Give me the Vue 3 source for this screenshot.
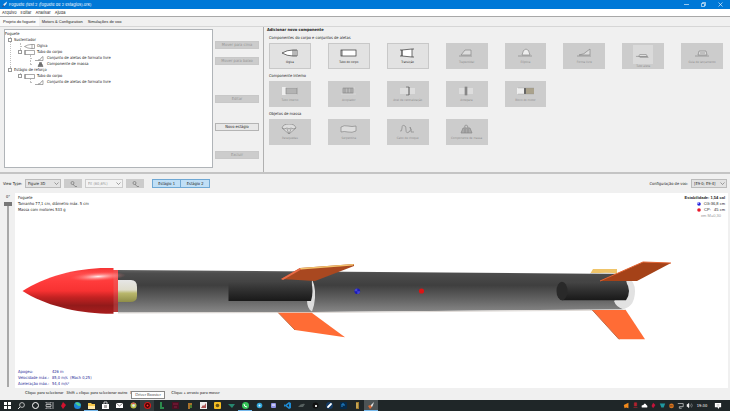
<script setup>
import { ref } from 'vue'

const rotation = ref(0)
const menus = ['Arquivo', 'Editar', 'Analisar', 'Ajuda']
const tabs = ['Projeto do foguete', 'Motors & Configuration', 'Simulações de voo']

const sections = [
  {
    title: 'Componentes do corpo e conjuntos de aletas',
    items: [
      { label: 'Ogiva', icon: 'nose', on: true },
      { label: 'Tubo do corpo', icon: 'tube', on: true },
      { label: 'Transição', icon: 'transition', on: true },
      { label: 'Trapezoidal', icon: 'trapezoid' },
      { label: 'Elíptica', icon: 'ellipse' },
      { label: 'Forma livre', icon: 'free' },
      { label: 'Tubo aleta', icon: 'tubefin', light: true },
      { label: 'Guia de lançamento', icon: 'lug' }
    ]
  },
  {
    title: 'Componente interno',
    items: [
      { label: 'Tubo interno', icon: 'inner' },
      { label: 'Acoplador', icon: 'coupler' },
      { label: 'Anel de centralização', icon: 'ring' },
      { label: 'Antepara', icon: 'bulkhead' },
      { label: 'Bloco do motor', icon: 'block' }
    ]
  },
  {
    title: 'Objetos de massa',
    items: [
      { label: 'Paraquedas', icon: 'chute' },
      { label: 'Serpentina', icon: 'streamer' },
      { label: 'Cabo de choque', icon: 'cord' },
      { label: 'Componente de massa', icon: 'mass' }
    ]
  }
]

const icons = {
  nose: '<path d="M1 5Q6 2 12 2H16V8H12Q6 8 1 5Z" fill="#fff"/><path d="M12 2V8M14 2V8"/>',
  tube: '<rect x="1" y="2" width="15" height="6" fill="#fff"/><path d="M2 2V8"/>',
  transition: '<path d="M3 2L13 1V9L3 8Z" fill="#fff"/><path d="M13 1H15M13 9H15M1 2H3M1 8H3" /><path d="M3 2V8"/>',
  trapezoid: '<path d="M3 7L7 2H13V7Z" fill="#ddd"/><path d="M1 8H14"/>',
  ellipse: '<path d="M5 7Q6 1 9 1T13 7Z" fill="#eee"/><path d="M1 8H15"/>',
  free: '<path d="M3 7Q9 6 10 4L14 1V7Z" fill="#ddd"/><path d="M1 8H15"/>',
  tubefin: '<path d="M4 7L5 5H12L13 7Z" fill="#eee"/><path d="M1 7H13L14 8H5"/>',
  lug: '<path d="M4 7L5 3H12L13 7Z" fill="#ddd"/><path d="M6 5H11M1 8H15"/>',
  inner: '<rect x="1" y="1" width="15" height="8" fill="#eee" stroke="none"/><rect x="5" y="2" width="11" height="6" fill="#bbb"/><path d="M5 4H16M5 6H16" stroke-width=".3"/>',
  coupler: '<path d="M1 8H16M2 2H15" stroke="#ddd"/><rect x="3" y="2" width="10" height="5" fill="#bbb"/><path d="M8 2V7M5 2V7M11 2V7"/>',
  ring: '<rect x="1" y="2" width="15" height="6" fill="#ddd" stroke="none"/><path d="M7 1H10V9H7M10 1V9" stroke="#666"/>',
  bulkhead: '<rect x="1" y="2" width="14" height="6" fill="#ddd" stroke="none"/><rect x="7" y="1" width="2" height="8" fill="#888"/>',
  block: '<rect x="0" y="2" width="8" height="6" fill="#eee" stroke="none"/><rect x="7" y="2" width="2" height="6" fill="#666" stroke="none"/><rect x="9" y="2" width="8" height="6" fill="#aaa28c" stroke="none"/><path d="M1 2H17M1 8H17" stroke-width=".3"/>',
  chute: '<path d="M1 4Q2 0 8 0T15 4Q12 6 10 4Q8 6 6 4Q3 6 1 4L8 10L15 4M6 5L8 10L10 5" fill="#ddd"/>',
  streamer: '<path d="M1 3Q4 1 8 2T16 2V7Q12 9 8 8T1 8Z" fill="#ddd"/>',
  cord: '<path d="M1 7Q3 8 3 4T6 2Q7 2 7 6T10 8T11 3Q13 6 12 8H15" fill="none"/>',
  mass: '<path d="M3 9L5 4H12L14 9Z" fill="#aaa"/><path d="M7 4Q6 1 8 1T10 4M7 5V9M10 5V9"/>'
}

const taskIcons = [
  { name: 'Iniciar', svg: '<path d="M1 1H4V4H1ZM5 1H8V4H5ZM1 5H4V8H1ZM5 5H8V8H5Z" fill="#fff"/>' },
  { name: 'Pesquisar', svg: '<circle cx="5" cy="4" r="2.4" fill="none" stroke="#ddd" stroke-width=".8"/><path d="M3 6L1 8" stroke="#ddd"/>' },
  { name: 'Cortana', svg: '<circle cx="4.500" cy="4.500" r="3" fill="none" stroke="#fff"/>' },
  { name: 'Visão de tarefas', svg: '<path d="M1 1V2H6V1M1 8V7H6V8M1 3.500H6V5.500H1ZM8 1V8" fill="none" stroke="#ddd" stroke-width=".7"/>' },
  { name: 'AMD', svg: '<path d="M4 1L7 4L4 8L2 5Z" fill="#d3122f"/>' },
  { name: 'Edge', svg: '<circle cx="4.500" cy="4.500" r="3.500" fill="#1c86d8"/><path d="M2 2Q5 0 8 4Q6 6 4 4Z" fill="#4ccf8c"/>' },
  { name: 'Explorador', open: true, svg: '<path d="M1 2H4L5 3H8V7H1Z" fill="#f5c84b"/><path d="M1 5H8V8H1Z" fill="#ffe9a8"/>' },
  { name: 'Loja', svg: '<path d="M1 3H8V8H1Z" fill="#fff"/><path d="M3 3V1H6V3" fill="none" stroke="#fff" stroke-width=".7"/><path d="M3 4H6V7H3Z" fill="#aaa"/>' },
  { name: 'Correio', svg: '<path d="M1 2H8V7H1Z" fill="#fff"/><path d="M1 2L4.500 5L8 2" fill="none" stroke="#333" stroke-width=".6"/>' },
  { name: 'Chrome', svg: '<circle cx="4.500" cy="4.500" r="3" fill="#b9c04a"/><path d="M2 3Q4 0 7 3Z" fill="#d55"/><circle cx="4.500" cy="4.500" r="1.300" fill="#dde8f5"/>' },
  { name: 'Driver Booster', lit: true, svg: '<circle cx="4.500" cy="4.500" r="3" fill="#400" stroke="#d11a1a" stroke-width="1.200"/><circle cx="4.500" cy="4.500" r="1" fill="#f33"/>' },
  { name: 'Editor', svg: '<path d="M3 1V8H7V6H5V1Z" fill="#2c8b4c"/>' },
  { name: 'Captura', svg: '<rect x="1" y="1" width="7" height="7" fill="#4a1022"/><path d="M2 3H7M3 6H6" stroke="#a2264a" stroke-width=".7"/>' },
  { name: 'Jogo', svg: '<path d="M3 2H7V4H5V8H3Z" fill="#a7722b"/><path d="M5 4H7V7H5Z" fill="#4d7a30"/>' },
  { name: 'Fotos', svg: '<rect x="1" y="1" width="7" height="7" fill="#eee"/><path d="M2 7L4 4L5 5L7 2V7Z" fill="#a55"/>' },
  { name: 'Música', svg: '<rect x="1" y="1" width="7" height="7" rx="1" fill="#f3bd23"/><circle cx="4.500" cy="4.500" r="1.800" fill="#6a5312"/>' },
  { name: 'Diamante', svg: '<path d="M1 3H8L5 7Z" fill="#27876f"/>' },
  { name: 'WhatsApp', open: true, svg: '<circle cx="4.500" cy="4.500" r="3.500" fill="#37c559"/><path d="M3 3Q3 6 6 6" fill="none" stroke="#fff"/>' },
  { name: 'Telegram', svg: '<circle cx="4.500" cy="4.500" r="2.800" fill="#32a5d9"/><circle cx="4.500" cy="4.500" r="1" fill="#dff4ff"/>' },
  { name: 'Discord', svg: '<rect x="2" y="2" width="5" height="5" rx="1" fill="#8f93e6"/><path d="M3 4H6" stroke="#fff"/>' },
  { name: 'Código', svg: '<path d="M6 1L8 2V7L6 8L2 5L1 6V3L2 4ZM6 3L4 4.500L6 6Z" fill="#1f8ad2" fill-rule="evenodd"/>' },
  { name: 'Console', svg: '<path d="M1 6Q4 2 8 3L6 6Z" fill="#56605f"/>' },
  { name: 'Epic', svg: '<circle cx="4.500" cy="4.500" r="3" fill="#111"/><path d="M4 4H6V6H4Z" fill="#ddd"/>' },
  { name: 'Steam', svg: '<circle cx="4.500" cy="4.500" r="3.500" fill="#143a63"/><path d="M3 6L6 3" stroke="#fff" stroke-width="1.800" stroke-linecap="round"/>' },
  { name: 'Photoshop', svg: '<rect x="1" y="1" width="7" height="7" rx="1" fill="#062a4a"/><path d="M3 6V3H5V5" fill="none" stroke="#2388d4"/>' },
  { name: 'Arquivo', svg: '<rect x="3" y="1" width="3" height="7" fill="#a07a2c"/><path d="M4 2V7" stroke="#e8ce7a"/>' },
  { name: 'OpenRocket', active: true, open: true, svg: '<path d="M3 6L4 4L7 1L6 4L5 6Z" fill="#e6e1df"/><path d="M1 5L3 4L5 6L3 8Z" fill="#d66a35"/>' }
]

const trayIcons = [
  { name: 'Avast', svg: '<path d="M1 4L7 1V8L4 7L2 8Z" fill="#f28a1c"/>' },
  { name: 'Microfone', svg: '<path d="M3 1H6V5H3ZM2 7H7" fill="#b3232f" stroke="#b3232f" stroke-width=".8"/>' },
  { name: 'Nuvem', svg: '<path d="M1 7Q0 4 3 4Q5 0 7 4Q9 5 8 7Z" fill="#fff"/>' },
  { name: 'Radeon', svg: '<path d="M4 1L7 4L4 8L2 5Z" fill="#c3133a"/>' },
  { name: 'Escudo', svg: '<path d="M1 2H8L6 7H3Z" fill="#1f97a0"/>' },
  { name: 'Atualização', svg: '<circle cx="4.500" cy="5" r="3" fill="#d8741f"/><path d="M2 5H6" stroke="#5b3010"/>' },
  { name: 'Rede', svg: '<path d="M1 2H8V6H3V8H6" fill="none" stroke="#eee" stroke-width=".8"/>' },
  { name: 'Volume', svg: '<path d="M1 3H2L4 1V8L2 6H1Z" fill="#eee"/><path d="M5 3Q6 4.500 5 6M7 2Q9 4.500 7 7" fill="none" stroke="#bbb" stroke-width=".7"/>' }
]
</script>

<template>
  <div class="app">
    <header class="titlebar">
      <svg class="app-icon" viewBox="0 0 7 7"><path d="M1 6L2 3L6 0L5 3L3 5Z" fill="#dce9f5" /><path d="M0 6L2 4L3 6Z" fill="#333c70" /></svg>
      <span class="title">Foguete (test 2 (foguete de 2 estagios).ork)</span>
      <button class="win" aria-label="Minimizar"><svg viewBox="0 0 5 5"><path d="M0 2.500H5" /></svg></button>
      <button class="win" aria-label="Restaurar"><svg viewBox="0 0 5 5"><path d="M.5 1.500H3.500V4.500H.5ZM1.500 1.500V.5H4.500V3.500H3.500" /></svg></button>
      <button class="win" aria-label="Fechar"><svg viewBox="0 0 5 5"><path d="M.5 .5L4.500 4.500M4.500 .5L.5 4.500" /></svg></button>
    </header>

    <nav class="menubar">
      <button v-for="m in menus" :key="m">{{ m }}</button>
    </nav>

    <div class="tabs" role="tablist">
      <button v-for="(t, i) in tabs" :key="t" role="tab" :aria-selected="i === 0" :class="{ selected: i === 0 }">{{ t }}</button>
    </div>

    <main class="upper">
      <section class="design">
        <div class="tree">
          <div class="row">Foguete</div>
          <ul>
            <li>
              <div class="row"><i class="handle box"></i>Sustentador</div>
              <ul>
                <li>
                  <div class="row"><i class="handle"></i><svg viewBox="0 0 11 5"><path d="M.5 2.500Q4 .5 7 .5H10.500V4.500H7Q4 4.500 .5 2.500ZM8 .5V4.500" /></svg>Ogiva</div>
                </li>
                <li>
                  <div class="row"><i class="handle box"></i><svg viewBox="0 0 11 5"><path d="M.5 .5H10.500V4.500H.5ZM1.500 .5V4.500" /></svg>Tubo do corpo</div>
                  <ul>
                    <li><div class="row"><i class="handle"></i><svg viewBox="0 0 11 5"><path d="M1 4.500H9M4 4Q7 4 7 2L9 .5V4.500" /></svg>Conjunto de aletas de formato livre</div></li>
                    <li><div class="row"><i class="handle"></i><svg viewBox="0 0 11 5"><path d="M4 4.500L5 2H8L9 4.500ZM5.500 2V.5H7.500V2" fill="#777" /></svg>Componente de massa</div></li>
                  </ul>
                </li>
              </ul>
            </li>
            <li>
              <div class="row"><i class="handle box"></i>Estágio de reforço</div>
              <ul>
                <li>
                  <div class="row"><i class="handle box"></i><svg viewBox="0 0 11 5"><path d="M.5 .5H10.500V4.500H.5ZM1.500 .5V4.500" /></svg>Tubo do corpo</div>
                  <ul>
                    <li><div class="row"><i class="handle"></i><svg viewBox="0 0 11 5"><path d="M1 4.500H9M4 4Q7 4 7 2L9 .5V4.500" /></svg>Conjunto de aletas de formato livre</div></li>
                  </ul>
                </li>
              </ul>
            </li>
          </ul>
        </div>
        <div class="actions">
          <button disabled>Mover para cima</button>
          <button disabled>Mover para baixo</button>
          <button class="apart" disabled>Editar</button>
          <button class="spaced">Novo estágio</button>
          <button class="spaced" disabled>Excluir</button>
        </div>
      </section>

      <section class="palette">
        <h1>Adicionar novo componente</h1>
        <template v-for="s in sections" :key="s.title">
          <h2>{{ s.title }}</h2>
          <div class="cards">
            <button v-for="c in s.items" :key="c.label" class="card" :class="{ light: c.light }" :disabled="!c.on">
              <svg viewBox="0 0 17 10" v-html="icons[c.icon]"></svg>
              <span>{{ c.label }}</span>
            </button>
          </div>
        </template>
      </section>
    </main>

    <div class="toolbar">
      <label for="view">View Type:</label>
      <span class="drop wide">
        <select id="view"><option>Figure 3D</option></select>
        <svg viewBox="0 0 5 3"><path d="M.5 .5L2.500 2.500L4.500 .5" /></svg>
      </span>
      <button class="mag" disabled aria-label="Reduzir"><svg viewBox="0 0 7 6"><circle cx="2.500" cy="2" r="1.500" /><path d="M3 3L5 5.500M5 5.500H7" /></svg></button>
      <span class="drop fit">
        <select disabled aria-label="Escala"><option>Fit (60,6%)</option></select>
        <svg viewBox="0 0 5 3"><path d="M.5 .5L2.500 2.500L4.500 .5" /></svg>
      </span>
      <button class="mag" disabled aria-label="Ampliar"><svg viewBox="0 0 7 6"><circle cx="2.500" cy="2" r="1.500" /><path d="M3 3L5 5.500M5 5.500H7" /></svg></button>
      <div class="stages">
        <button aria-pressed="true">Estágio 1</button>
        <button aria-pressed="true">Estágio 2</button>
      </div>
      <label class="push" for="config">Configuração de voo:</label>
      <span class="drop wide">
        <select id="config"><option>[E9-0; E9-4]</option></select>
        <svg viewBox="0 0 5 3"><path d="M.5 .5L2.500 2.500L4.500 .5" /></svg>
      </span>
    </div>

    <div class="viewer">
      <div class="rotation">
        <label for="rot">0°</label>
        <input id="rot" v-model="rotation" type="range" min="0" max="360" />
      </div>
      <div class="canvas">
        <div class="info">
          <p>Foguete<br />Tamanho 77,1 cm, diâmetro máx. 5 cm<br />Massa com motores 533 g</p>
          <div class="stability">
            <b>Estabilidade: 1,54 cal</b>
            <span><svg viewBox="0 0 4 4"><circle cx="2" cy="2" r="1.800" fill="#2222d8" /><path d="M2 0V2H0A2 2 0 0 1 2 0" fill="#99f" /></svg>CG:36,8 cm</span>
            <span><svg viewBox="0 0 4 4"><circle cx="2" cy="2" r="1.800" fill="#e8182a" /></svg>CP:&nbsp; &nbsp;45 cm</span>
            <small>em M=0,30</small>
          </div>
        </div>
        <svg class="rocket" viewBox="15 220 713 149" role="img" aria-label="Foguete">
          <defs>
            <linearGradient id="body" x1="0" y1="0" x2="0" y2="1">
              <stop offset="0" stop-color="#606060" />
              <stop offset=".08" stop-color="#4d4d4d" />
              <stop offset=".36" stop-color="#3f3f3f" />
              <stop offset=".7" stop-color="#646464" />
              <stop offset="1" stop-color="#888" />
            </linearGradient>
            <linearGradient id="motor" x1="0" y1="0" x2="0" y2="1">
              <stop offset="0" stop-color="#464646" />
              <stop offset=".35" stop-color="#353535" />
              <stop offset="1" stop-color="#191919" />
            </linearGradient>
            <linearGradient id="nose" x1="0" y1="0" x2="0" y2="1">
              <stop offset="0" stop-color="#f53434" />
              <stop offset=".12" stop-color="#ff4949" />
              <stop offset=".3" stop-color="#ff3b3b" />
              <stop offset=".5" stop-color="#f73232" />
              <stop offset=".64" stop-color="#c42222" />
              <stop offset=".82" stop-color="#931a1a" />
              <stop offset="1" stop-color="#a91d1d" />
            </linearGradient>
            <radialGradient id="shine">
              <stop offset="0" stop-color="#fff" stop-opacity=".9" />
              <stop offset="1" stop-color="#ff7070" stop-opacity="0" />
            </radialGradient>
            <linearGradient id="mass" x1="0" y1="0" x2="0" y2="1">
              <stop offset="0" stop-color="#e6e6e6" />
              <stop offset=".45" stop-color="#dedccb" />
              <stop offset=".6" stop-color="#b9b76c" />
              <stop offset="1" stop-color="#8f8e48" />
            </linearGradient>
          </defs>
          <path d="M590 274L593 269H617V274Z" fill="#efc469" />
          <path d="M600 273Q635 271 635 291T615 310H590V273Z" fill="#e2e2e2" />
          <path d="M118 270L314 271.500L622 274Q629 278 625 290L614 301Q616 307 623 309.200L314 312L118 312.500Z" fill="url(#body)" />
          <path d="M118 313L314 312.500L626 310" fill="none" stroke="#ddd8d4" />
          <path d="M312 279Q317 290 314 305L312 311.500Q307 309 307 300H311Z" fill="#ddd" />
          <path d="M228.500 280.700H311Q314 291 311 301H228.500Z" fill="url(#motor)" />
          <path d="M562 281.700H626Q632 291 626 300.300H562Z" fill="url(#motor)" />
          <ellipse cx="562" cy="291" rx="5.500" ry="9.300" fill="#292929" />
          <path d="M118 280H131Q137 280 137 287V296Q137 302 130 302H118Z" fill="url(#mass)" />
          <path d="M112 270H118V312H112Z" fill="url(#nose)" />
          <path d="M112 270H118V312H112Z" fill="#d88" opacity=".25" />
          <path d="M22.500 291C44 277 76 268 106 268H113.500V313.700H106C76 313 44 305 22.500 291Z" fill="url(#nose)" />
          <ellipse cx="98" cy="276.500" rx="28" ry="4.500" fill="url(#shine)" transform="rotate(-3 99 276)" />
          <path d="M281 279L300 268L354 264V266L315 281Z" fill="#a94820" />
          <path d="M281 279L300 268L302 269L283 280Z" fill="#e96c48" />
          <path d="M300 268L354 264L353 265.500L301 269.500Z" fill="#f4c36e" />
          <path d="M278.300 312.700H311.700L345 337.300L295 330Z" fill="#ff6c35" />
          <path d="M278.300 312.700L295 330" stroke="#c57048" />
          <path d="M600 281L643 262L671 263L637 281Z" fill="#a54218" />
          <path d="M600 281L643 262L671 263" fill="none" stroke="#e36331" />
          <path d="M592.300 310H625.700L645 339.300H619Z" fill="#ff6c35" />
          <path d="M592.300 310L619 339.300" stroke="#c06a48" />
          <circle cx="357.300" cy="291.300" r="2.800" fill="#1a1ab8" />
          <path d="M357.300 291.300V288.500A2.800 2.800 0 0 0 354.500 291.300ZM357.300 291.300V294.100A2.800 2.800 0 0 0 360.100 291.300Z" fill="#4747d0" />
          <circle cx="421.500" cy="291" r="2.600" fill="#dc1414" />
        </svg>
        <dl class="flight">
          <dt>Apogeu:</dt><dd>426 m</dd>
          <dt>Velocidade máx.:</dt><dd>85,0 m/s &nbsp;(Mach 0,25)</dd>
          <dt>Aceleração máx.:</dt><dd>54,4 m/s²</dd>
        </dl>
      </div>
    </div>

    <div class="hints">
      <span>Clique para selecionar</span>
      <span>Shift + clique para selecionar outro</span>
      <span class="covered">Du</span>
      <span>Clique + arraste para mover</span>
      <div class="tooltip" role="tooltip">Driver Booster</div>
    </div>

    <footer class="taskbar">
      <button v-for="t in taskIcons" :key="t.name" class="task" :class="{ open: t.open, active: t.active, lit: t.lit }" :aria-label="t.name">
        <svg viewBox="0 0 9 9" v-html="t.svg"></svg>
      </button>
      <div class="tray">
        <button v-for="t in trayIcons" :key="t.name" :aria-label="t.name"><svg viewBox="0 0 9 9" v-html="t.svg"></svg></button>
        <time>19:30</time>
        <button class="notes" aria-label="Notificações"><svg viewBox="0 0 9 9"><path d="M1 1H8V6H6L5 8L4 6H1Z" fill="#fff" /><path d="M3 3H6M3 4.500H6" stroke="#888" stroke-width=".5" /></svg></button>
      </div>
    </footer>
  </div>
</template>

<style>
body {
  background: #f0f0f0;
}
</style>

<style scoped>
.app {
  display: flex;
  flex-direction: column;
  min-height: 100vh;
  background: #f0f0f0;
  color: #1c1c1c;
  font: 4px/6px "DejaVu Sans Condensed", "Noto Sans", sans-serif;
}
.app * {
  box-sizing: border-box;
}
button,
select {
  margin: 0;
  padding: 0;
  border: 0;
  background: none;
  color: inherit;
  font: inherit;
}
svg {
  display: block;
  flex: none;
}

.titlebar {
  display: flex;
  align-items: center;
  height: 9px;
  padding: 0 1px 0 2px;
  background: #0078d7;
  color: #fff;
  font-family: Inter, "Noto Sans", sans-serif;
}
.app-icon {
  width: 6px;
  height: 7px;
}
.title {
  flex: 1;
  padding-left: 1px;
}
.win {
  width: 17px;
}
.win svg {
  width: 5px;
  height: 5px;
  margin: 0 auto;
  fill: none;
  stroke: #fff;
  stroke-width: 0.6;
}

.menubar {
  display: flex;
  gap: 4px;
  height: 8px;
  padding: 0 2px;
  border-bottom: 1px solid #a8a8a8;
  background: #fff;
  font-family: Inter, "Noto Sans", sans-serif;
}
.tabs {
  display: flex;
  gap: 1px;
  height: 10px;
  border-bottom: 1px solid #d6d6d6;
  font-family: "Liberation Sans", sans-serif;
}
.tabs button {
  padding: 0 2px;
}
.tabs .selected {
  padding: 0 3px;
  background: #fafafa;
}

.upper {
  display: grid;
  grid-template-columns: minmax(0, 263fr) minmax(0, 467fr);
  height: 147px;
  border-bottom: 2px solid #c4c4c4;
}
.design {
  display: flex;
  gap: 2px;
  padding: 2px 4px 4px 4px;
}
.tree {
  flex: 1;
  padding-top: 1px;
  border: 1px solid #b0b4b8;
  background: #fff;
}
.tree ul {
  margin: 0;
  padding-left: 10px;
  list-style: none;
}
.tree > ul {
  padding-left: 3px;
}
.tree li {
  position: relative;
}
.tree li::before {
  content: "";
  position: absolute;
  top: 0;
  bottom: 0;
  left: 2px;
  border-left: 1px dotted #c0c0c0;
}
.tree li:last-child::before {
  bottom: auto;
  height: 3px;
}
.row {
  display: flex;
  align-items: center;
  gap: 2px;
  height: 6px;
}
.row svg {
  width: 11px;
  height: 5px;
  fill: none;
  stroke: #555;
  stroke-width: 0.5;
}
.handle {
  position: relative;
  width: 4px;
  height: 1px;
  background: linear-gradient(90deg, transparent 50%, #c0c0c0 50%);
}
.handle.box {
  height: 4px;
  border: 1px solid #999;
  background: #fff;
}
.actions {
  display: flex;
  flex: 0 0 44px;
  flex-direction: column;
  gap: 8px;
  padding-top: 12px;
}
.actions button {
  height: 8px;
  border: 1px solid #b4b4b4;
  background: #e8e8e8;
  line-height: 6px;
}
.actions button:disabled {
  border-color: #c8c8c8;
  background: #ccc;
  color: #949494;
}
.actions .apart {
  margin-top: 22px;
}
.actions .spaced {
  margin-top: 12px;
}

.palette {
  padding: 0 7px 0 5px;
  border-left: 1px solid #b0b0b0;
}
h1,
h2 {
  margin: 0;
  font-size: 4px;
  line-height: 6px;
}
h1 {
  padding-bottom: 2px;
}
h2 {
  font-weight: 400;
}
.palette h1 {
  margin-left: -2px;
}
.cards {
  display: grid;
  grid-template-columns: repeat(8, minmax(0, 1fr));
  gap: 17px;
  padding: 2px 0 4px;
}
.card {
  display: flex;
  flex-direction: column;
  align-items: center;
  justify-content: center;
  gap: 2px;
  height: 26px;
  border: 1px solid #c8c8c8;
  background: #e2e2e2;
  font-size: 3px;
  line-height: 4px;
  white-space: nowrap;
}
.card:disabled {
  border-color: #ccc;
  background: #ccc;
  color: #8c8c8c;
}
.card svg {
  width: 17px;
  height: 10px;
  fill: none;
  stroke: #333;
  stroke-width: 0.7;
}
.card:disabled svg {
  stroke: #888;
}
.card.light svg {
  width: 20px;
  height: 19px;
  padding: 3px 2px;
  background: #dadada;
}
.card.light {
  gap: 0;
}

.toolbar {
  display: flex;
  align-items: center;
  height: 19px;
  padding: 0 3px;
}
.toolbar label {
  padding-right: 3px;
}
.drop {
  position: relative;
  display: block;
}
.drop select {
  display: block;
  width: 100%;
  height: 9px;
  padding: 0 8px 0 2px;
  border: 1px solid #bbb;
  border-radius: 0;
  background: #e3e3e3;
  appearance: none;
  opacity: 1;
}
.drop select:disabled {
  border-color: #ccc;
  background: #f3f3f3;
  color: #999;
}
.drop svg {
  position: absolute;
  top: 3px;
  right: 2px;
  width: 5px;
  height: 3px;
  fill: none;
  stroke: #666;
  stroke-width: 0.6;
  pointer-events: none;
}
.drop.wide {
  width: 36px;
}
.drop.fit {
  width: 38px;
}
.mag {
  width: 18px;
  height: 9px;
  margin: 0 3px;
  background: #ccc;
}
.mag svg {
  width: 7px;
  height: 6px;
  margin: 0 auto;
  fill: none;
  stroke: #777;
  stroke-width: 0.7;
}
.stages {
  display: flex;
  padding-left: 5px;
}
.stages button {
  width: 29px;
  height: 9px;
  border: 1px solid #6fa8d4;
  background: #c0dff6;
}
.stages button + button {
  border-left: 0;
}
.push {
  margin-left: auto;
}

.viewer {
  display: flex;
  flex: 1;
  padding-right: 2px;
}
.rotation {
  display: flex;
  flex: 0 0 15px;
  flex-direction: column;
  align-items: center;
  padding: 1px 0 1px 1px;
}
.rotation input {
  flex: 1;
  width: 8px;
  min-height: 0;
  height: 0;
  margin: 2px 0 0;
  background: linear-gradient(90deg, transparent 3px, #a8a8a8 3px, #a8a8a8 5px, transparent 5px);
  writing-mode: vertical-lr;
  appearance: none;
}
.rotation input::-webkit-slider-thumb {
  width: 8px;
  height: 4px;
  background: #777;
  appearance: none;
}
.canvas {
  display: flex;
  flex: 1;
  flex-direction: column;
  justify-content: space-between;
  min-width: 0;
  background: #fff;
}
.info {
  display: flex;
  justify-content: space-between;
  padding: 2px 3px 0;
}
.info p {
  margin: 0;
}
.stability {
  display: flex;
  flex-direction: column;
  align-items: flex-end;
  font-family: "Liberation Sans", sans-serif;
}
.stability span {
  display: flex;
  align-items: center;
  gap: 3px;
}
.stability span svg {
  width: 4px;
  height: 4px;
}
.stability small {
  padding-right: 4px;
  color: #999;
  font-size: 4px;
}
.rocket {
  width: 100%;
  height: auto;
}
.flight {
  display: grid;
  grid-template-columns: 34px 1fr;
  margin: 0;
  padding: 0 3px 1px;
  color: #1f1f96;
}
.flight dd {
  margin: 0;
}

.hints {
  position: relative;
  display: flex;
  gap: 3px;
  height: 12px;
  padding: 2px 25px 0;
  font-family: Lato, "Liberation Sans", sans-serif;
}
.hints .covered {
  width: 38px;
}
.tooltip {
  position: absolute;
  top: 3px;
  left: 131px;
  width: 34px;
  height: 8px;
  border: 1px solid #888;
  background: #fff;
  color: #555;
  text-align: center;
}

.taskbar {
  display: flex;
  height: 11px;
  background: #1f2628;
  color: #fff;
}
.taskbar svg {
  width: 9px;
  height: 9px;
  margin: 0 auto;
}
.task {
  width: 14px;
  border-bottom: 1px solid transparent;
}
.task.open {
  border-bottom-color: #76b9ed;
}
.task.active {
  background: #4d5456;
}
.task.lit {
  background: #343b3d;
}
.tray {
  display: flex;
  align-items: center;
  margin-left: auto;
  padding-right: 8px;
}
.tray button {
  width: 9px;
}
.tray svg {
  width: 7px;
  height: 7px;
}
.tray time {
  width: 16px;
  text-align: center;
}
.tray .notes {
  margin-left: 3px;
}
.tray .notes svg {
  width: 8px;
  height: 8px;
}
</style>
